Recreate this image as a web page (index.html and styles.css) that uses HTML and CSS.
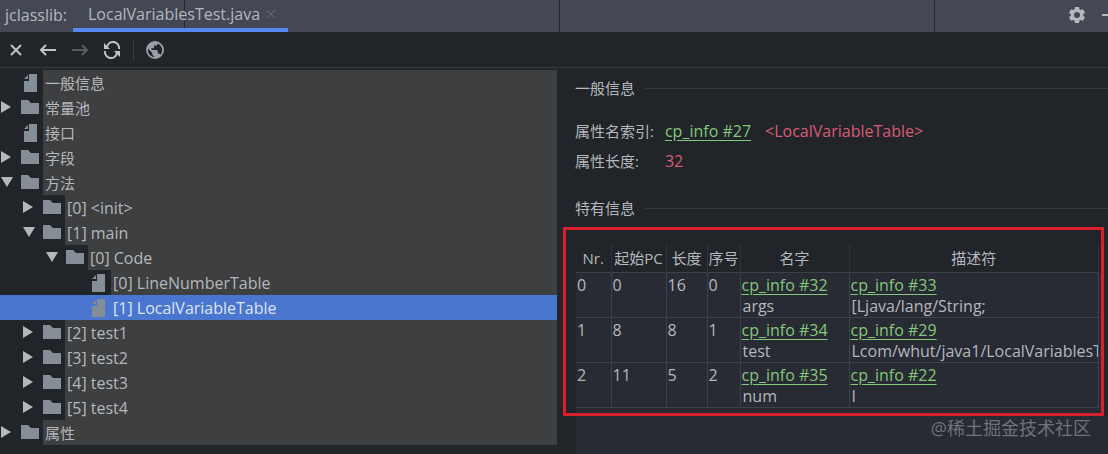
FILE: index.html
```
<!DOCTYPE html>
<html lang="zh">
    <head>
        <meta charset="utf-8">
        <title>jclasslib</title>
        <link rel="stylesheet" href="styles.css">
    </head>
    <body>
        <svg class="defs" aria-hidden="true">
            <symbol id="folder" viewBox="0 0 18 14"><path d="M0 0h7l3 3h8v11H0z"/></symbol>
            <symbol id="file" viewBox="0 0 18 18"><path d="M8 0h8v18H3V7h5z"/><path d="M3 5l4-4v4z"/></symbol>
            <symbol id="closed" viewBox="0 0 10 12"><path d="M0 0l10 6-10 6z"/></symbol>
            <symbol id="opened" viewBox="0 0 12 10"><path d="M0 0h12L6 10z"/></symbol>
        </svg>
        <header class="tabs">
            <span class="title">jclasslib:</span>
            <div class="tab">
                <a href="#">LocalVariablesTest.java</a>
                <button class="close" aria-label="Close tab"><svg width="10" height="10" viewBox="0 0 10 10"><path d="M1 1l8 8M9 1l-8 8"/></svg></button>
            </div>
            <div class="window">
                <button aria-label="Settings"><svg width="16" height="16" viewBox="0 0 16 16"><path class="gear" fill-rule="evenodd" d="M6 0h4l.5 2.400 1.200.7L14 2.300l2 3.400L14.200 7.300v1.400L16 10.300l-2 3.400-2.300-.8-1.200.7L10 16H6l-.5-2.400-1.200-.7-2.300.8-2-3.400 1.800-1.600V7.300L0 5.700l2-3.400 2.300.8 1.200-.7zM8 5a3 3 0 1 0 0 6a3 3 0 0 0 0-6z"/></svg></button>
                <button aria-label="Hide"><svg width="12" height="16" viewBox="0 0 12 16"><path d="M0 8h12" stroke-width="2"/></svg></button>
            </div>
        </header>
        <nav class="toolbar">
            <button aria-label="Close"><svg width="18" height="18" viewBox="0 0 18 18"><path d="M4 4l10 10M14 4L4 14"/></svg></button>
            <button aria-label="Back"><svg width="18" height="18" viewBox="0 0 18 18"><path d="M17 9H2M7 4L2 9l5 5"/></svg></button>
            <button aria-label="Forward" class="off"><svg width="18" height="18" viewBox="0 0 18 18"><path d="M1 9h15M11 4l5 5-5 5"/></svg></button>
            <button aria-label="Reload"><svg width="18" height="18" viewBox="0 0 18 18"><path d="M4 6a6 6 0 0 1 12 2M14 12a6 6 0 0 1-12-2"/><path class="fill" d="M1 2v6h6zM17 16v-6h-6z"/></svg></button>
            <span class="line"></span>
            <button aria-label="Browser" class="web"><svg width="18" height="18" viewBox="0 0 18 18"><path class="fill" fill-rule="evenodd" d="M9 0a9 9 0 1 0 0 18A9 9 0 0 0 9 0zM8 16C4 15.500 1.500 12 2 7.500L6.300 12v1c0 1 .8 1.800 1.700 1.800zM14.300 13.800c-.3-.7-1-1.200-1.700-1.200h-.9V10c0-.5-.4-.9-.9-.9H5.400V7.300h1.800c.5 0 .9-.4.9-.9V4.600h1.800c1 0 1.800-.8 1.800-1.800v-.4c4.500 2 6 7.600 2.600 11.400z"/></svg></button>
        </nav>
        <main class="main">
            <ul class="tree">
                <li class="row"><span class="arrow"></span><svg class="icon"><use href="#file"/></svg><span class="name zh">一般信息</span></li>
                <li class="row"><button class="arrow" aria-label="Expand"><svg width="10" height="12"><use href="#closed"/></svg></button><svg class="icon dir"><use href="#folder"/></svg><span class="name zh">常量池</span></li>
                <li class="row"><span class="arrow"></span><svg class="icon"><use href="#file"/></svg><span class="name zh">接口</span></li>
                <li class="row"><button class="arrow" aria-label="Expand"><svg width="10" height="12"><use href="#closed"/></svg></button><svg class="icon dir"><use href="#folder"/></svg><span class="name zh">字段</span></li>
                <li class="row"><button class="arrow" aria-label="Collapse"><svg width="12" height="10"><use href="#opened"/></svg></button><svg class="icon dir"><use href="#folder"/></svg><span class="name zh">方法</span></li>
                <li class="row in1"><button class="arrow" aria-label="Expand"><svg width="10" height="12"><use href="#closed"/></svg></button><svg class="icon dir"><use href="#folder"/></svg><span class="name">[0] &lt;init&gt;</span></li>
                <li class="row in1"><button class="arrow" aria-label="Collapse"><svg width="12" height="10"><use href="#opened"/></svg></button><svg class="icon dir"><use href="#folder"/></svg><span class="name">[1] main</span></li>
                <li class="row in2"><button class="arrow" aria-label="Collapse"><svg width="12" height="10"><use href="#opened"/></svg></button><svg class="icon dir"><use href="#folder"/></svg><span class="name">[0] Code</span></li>
                <li class="row in3"><span class="arrow"></span><svg class="icon"><use href="#file"/></svg><span class="name">[0] LineNumberTable</span></li>
                <li class="row in3 selected"><span class="arrow"></span><svg class="icon"><use href="#file"/></svg><span class="name">[1] LocalVariableTable</span></li>
                <li class="row in1"><button class="arrow" aria-label="Expand"><svg width="10" height="12"><use href="#closed"/></svg></button><svg class="icon dir"><use href="#folder"/></svg><span class="name">[2] test1</span></li>
                <li class="row in1"><button class="arrow" aria-label="Expand"><svg width="10" height="12"><use href="#closed"/></svg></button><svg class="icon dir"><use href="#folder"/></svg><span class="name">[3] test2</span></li>
                <li class="row in1"><button class="arrow" aria-label="Expand"><svg width="10" height="12"><use href="#closed"/></svg></button><svg class="icon dir"><use href="#folder"/></svg><span class="name">[4] test3</span></li>
                <li class="row in1"><button class="arrow" aria-label="Expand"><svg width="10" height="12"><use href="#closed"/></svg></button><svg class="icon dir"><use href="#folder"/></svg><span class="name">[5] test4</span></li>
                <li class="row"><button class="arrow" aria-label="Expand"><svg width="10" height="12"><use href="#closed"/></svg></button><svg class="icon dir"><use href="#folder"/></svg><span class="name zh">属性</span></li>
            </ul>
            <section class="detail">
                <h2>一般信息</h2>
                <dl class="info">
                    <dt>属性名索引:</dt>
                    <dd><a href="#">cp_info #27</a><span>&lt;LocalVariableTable&gt;</span></dd>
                    <dt>属性长度:</dt>
                    <dd><span>32</span></dd>
                </dl>
                <h2>特有信息</h2>
                <div class="box">
                    <table>
                        <colgroup>
                            <col class="nr"><col class="pc"><col class="len"><col class="slot"><col class="var"><col>
                        </colgroup>
                        <thead>
                            <tr><th>Nr.</th><th>起始PC</th><th>长度</th><th>序号</th><th>名字</th><th>描述符</th></tr>
                        </thead>
                        <tbody>
                            <tr><td>0</td><td>0</td><td>16</td><td>0</td><td><a href="#">cp_info #32</a><p>args</p></td><td><a href="#">cp_info #33</a><p>[Ljava/lang/String;</p></td></tr>
                            <tr><td>1</td><td>8</td><td>8</td><td>1</td><td><a href="#">cp_info #34</a><p>test</p></td><td><a href="#">cp_info #29</a><p>Lcom/whut/java1/LocalVariablesTest;</p></td></tr>
                            <tr><td>2</td><td>11</td><td>5</td><td>2</td><td><a href="#">cp_info #35</a><p>num</p></td><td><a href="#">cp_info #22</a><p>I</p></td></tr>
                        </tbody>
                    </table>
                </div>
                <div class="rest"></div>
            </section>
        </main>
        <div class="mark">@稀土掘金技术社区</div>
    </body>
</html>
```

FILE: styles.css
```
*{
    box-sizing: border-box;
}
body{
    margin: 0;
    min-height: 100vh;
    display: flex;
    flex-direction: column;
    position: relative;
    background: #212529;
    color: #b4b8bd;
    font-family: "Open Sans", "Noto Sans CJK SC", sans-serif;
    font-size: 16px;
    line-height: 24px;
    overflow: hidden;
}
button{
    display: flex;
    align-items: center;
    justify-content: center;
    padding: 0;
    border: none;
    background: none;
    color: inherit;
}
svg{
    display: block;
    fill: none;
    stroke: currentColor;
    stroke-width: 2;
}
symbol, .fill, .gear{
    fill: currentColor;
    stroke: none;
}
.defs{
    position: absolute;
    width: 0;
    height: 0;
}
.tabs{
    display: flex;
    height: 32px;
    padding-left: 5px;
    background: repeating-linear-gradient(to right, #434854 0 374px, #23272f 374px 375px) -190px 0 / 200% 100%;
}
.title{
    width: 68px;
    line-height: 31px;
}
.tab{
    display: flex;
    align-items: center;
    gap: 6px;
    padding: 0 12px 0 15px;
    border-bottom: 4px solid #568af2;
}
.tab a{
    color: inherit;
    text-decoration: none;
    line-height: 28px;
}
.close{
    color: #666b75;
}
.close svg{
    stroke-width: 1;
}
.window{
    display: flex;
    gap: 17px;
    margin-left: auto;
    margin-right: -6px;
    height: 30px;
}
.toolbar{
    display: flex;
    align-items: center;
    gap: 14px;
    height: 36px;
    padding-left: 7px;
    border-bottom: 1px solid #373b42;
    color: #c0c2c4;
}
.off{
    color: #595c60;
}
.line{
    width: 1px;
    height: 22px;
    margin: 0 -2px 0 -2px;
    background: #373b40;
}
.web{
    color: #9a9fa5;
}
.main{
    flex: 1;
    display: grid;
    grid-template-columns: 557fr 551fr;
}
.tree{
    list-style-type: none;
    margin: 0;
    padding: 2px 0 9px;
}
.row{
    display: flex;
    align-items: center;
    height: 25px;
}
.in1{
    padding-left: 22px;
}
.in2{
    padding-left: 45px;
}
.in3{
    padding-left: 68px;
}
.arrow{
    width: 21px;
    padding-left: 1px;
    justify-content: flex-start;
}
.icon{
    width: 18px;
    height: 18px;
    margin-right: 4px;
    color: #858e96;
}
.dir{
    height: 14px;
}
.arrow svg, .dir{
    margin-bottom: 2px;
}
.name{
    flex: 1;
    height: 25px;
    padding: 1px 2px;
    background: #3e3f40;
}
.zh{
    font-size: 15px;
}
.selected, .selected .name{
    background: #4b76cf;
    color: #dfe4ee;
}
.detail{
    display: flex;
    flex-direction: column;
    min-width: 0;
    padding-left: 6px;
}
h2{
    display: flex;
    align-items: center;
    gap: 10px;
    margin: 8px 0 0 12px;
    font-size: 15px;
    font-weight: normal;
}
h2::after{
    content: "";
    flex: 1;
    height: 1px;
    background: #353940;
}
.info{
    display: grid;
    grid-template-columns: max-content 1fr;
    column-gap: 11px;
    row-gap: 6px;
    margin: 19px 0 15px 12px;
}
dt{
    font-size: 15px;
}
dd{
    display: flex;
    gap: 14px;
    margin: 0;
    color: #dc5b74;
}
a{
    color: #84c77a;
    text-underline-offset: 3px;
}
.box{
    margin: 7px 4px 0 0;
    padding: 14px 2px 5px 10px;
    border: 3px solid #d8212c;
    background: linear-gradient(#282b33, #282b33) 10px 42px no-repeat;
}
table{
    width: 100%;
    table-layout: fixed;
    border-collapse: collapse;
}
.nr{
    width: 35px;
}
.pc{
    width: 55px;
}
.len{
    width: 41px;
}
.slot{
    width: 33px;
}
.var{
    width: 109px;
}
th{
    height: 28px;
    padding: 0;
    border-right: 1px solid #2f343a;
    font-size: 15px;
    font-weight: normal;
}
td{
    height: 45px;
    padding: 1px 1px 0;
    border: 1px solid #3d4148;
    border-left: none;
    line-height: 22px;
    vertical-align: top;
    white-space: nowrap;
    overflow: hidden;
}
td p{
    margin: 0;
    padding-left: 1px;
    line-height: 21px;
}
.rest{
    flex: 1;
    margin-left: 13px;
    background: #282b33;
}
.mark{
    position: absolute;
    right: 17px;
    bottom: 14px;
    color: #6f7278;
    font-size: 18px;
}
```
